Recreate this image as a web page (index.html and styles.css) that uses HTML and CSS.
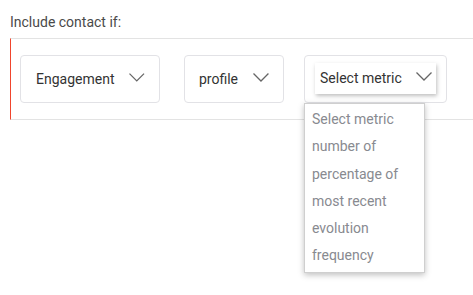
FILE: index.html
```
<!DOCTYPE html>
<html lang="en">
<head>
  <meta charset="UTF-8">
  <title>Include contact</title>
  <link rel="stylesheet" href="styles.css">
</head>
<body>
  <div class="label">Include contact if:</div>

  <div class="condition-row">
    <div class="field field-category">
      <span class="field-text">Engagement</span>
      <svg class="chevron" width="16" height="9" viewBox="0 0 16 9"><polyline points="0.5,0.5 8,8 15.5,0.5" /></svg>
    </div>

    <div class="field field-type">
      <span class="field-text">profile</span>
      <svg class="chevron" width="16" height="9" viewBox="0 0 16 9"><polyline points="0.5,0.5 8,8 15.5,0.5" /></svg>
    </div>

    <div class="field field-metric">
      <div class="select open">
        <span class="field-text">Select metric</span>
        <svg class="chevron" width="16" height="9" viewBox="0 0 16 9"><polyline points="0.5,0.5 8,8 15.5,0.5" /></svg>
      </div>
      <ul class="menu">
        <li>Select metric</li>
        <li>number of</li>
        <li>percentage of</li>
        <li>most recent</li>
        <li>evolution</li>
        <li>frequency</li>
      </ul>
    </div>
  </div>
</body>
</html>
```

FILE: styles.css
```
* {
  margin: 0;
  padding: 0;
  box-sizing: border-box;
}

html,
body {
  min-height: 100%;
  height: 100%;
}

body {
  font-family: Roboto, 'Liberation Sans', sans-serif;
  font-size: 14px;
  color: #333;
  background: #fff;
  padding: 13px 0 0 10px;
}

.label {
  color: #4a4a4a;
  line-height: 18px;
  margin-bottom: 7px;
}

.condition-row {
  display: flex;
  align-items: flex-start;
  border-top: 1px solid #e3e3e3;
  border-bottom: 1px solid #e3e3e3;
  border-left: 1px solid #f0452d;
  padding: 16px 0 16px 9px;
  height: 82px;
}

.field {
  display: flex;
  align-items: center;
  height: 48px;
  border: 1px solid #e2e2e6;
  border-radius: 4px;
  padding: 0 14px 0 15px;
  background: #fff;
}

.field-text {
  line-height: 20px;
  color: #333;
}

.chevron {
  margin-left: 15px;
  margin-top: -4px;
}

.chevron polyline {
  fill: none;
  stroke: #666;
  stroke-width: 1.3;
}

.field-category {
  width: 140px;
}

.field-type {
  width: 100px;
  margin-left: 24px;
  padding-left: 14px;
}

.field-metric {
  width: 143px;
  margin-left: 20px;
  padding: 0;
  position: relative;
}

.select {
  display: flex;
  align-items: center;
  width: 121px;
  height: 31px;
  margin: -2px 0 0 10px;
  padding: 0 4px 0 5px;
  background: #fff;
  box-shadow: 1px 2px 4px rgba(0, 0, 0, 0.25);
}

.select .chevron {
  margin-left: 14px;
}

.menu {
  position: absolute;
  top: 47px;
  left: -1px;
  width: 121px;
  list-style: none;
  background: #fff;
  border: 1px solid #cfcfcf;
  box-shadow: 0 2px 6px rgba(0, 0, 0, 0.25);
  padding: 2px 0;
  z-index: 5;
}

.menu li {
  line-height: 27.3px;
  padding-left: 7px;
  color: #888a90;
}
```
